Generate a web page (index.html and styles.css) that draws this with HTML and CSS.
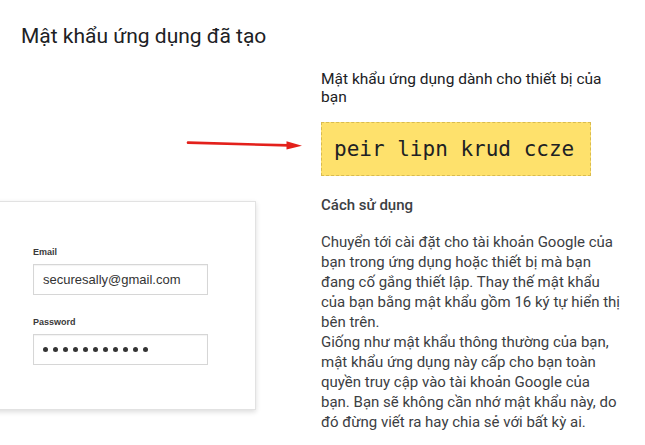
FILE: index.html
```html
<!DOCTYPE html>
<html lang="vi">
<head>
  <meta charset="UTF-8">
  <meta name="viewport" content="width=device-width, initial-scale=1.0">
  <title>Mật khẩu ứng dụng đã tạo</title>
  <link rel="stylesheet" href="styles.css">
</head>
<body>

  <h2 class="title">Mật khẩu ứng dụng đã tạo</h2>

  <div class="main">
    <div class="left-col">
      <!-- arrow pointing to the generated password -->
      <svg class="arrow" width="118" height="12" viewBox="0 0 118 12">
        <path d="M2 4.6 L103 7.4" stroke="#e3201b" stroke-width="2.6" stroke-linecap="round" fill="none"/>
        <path d="M100.5 3.2 L116 7.8 L100.5 11.4 Z" fill="#e3201b"/>
      </svg>

      <div class="login-card">
        <label class="field-label">Email</label>
        <div class="field-box">securesally@gmail.com</div>

        <label class="field-label">Password</label>
        <div class="field-box dots">
          <span></span><span></span><span></span><span></span><span></span><span></span><span></span><span></span><span></span><span></span><span></span>
        </div>
      </div>
    </div>

    <div class="right-col">
      <p class="device-title">Mật khẩu ứng dụng dành cho thiết bị của bạn</p>
      <div class="app-password">peir lipn krud ccze</div>
      <p class="how-title">Cách sử dụng</p>
      <p class="how-text">Chuyển tới cài đặt cho tài khoản Google của bạn trong ứng dụng hoặc thiết bị mà bạn đang cố gắng thiết lập. Thay thế mật khẩu của bạn bằng mật khẩu gồm 16 ký tự hiển thị bên trên.<br>Giống như mật khẩu thông thường của bạn, mật khẩu ứng dụng này cấp cho bạn toàn quyền truy cập vào tài khoản Google của bạn. Bạn sẽ không cần nhớ mật khẩu này, do đó đừng viết ra hay chia sẻ với bất kỳ ai.</p>
    </div>
  </div>

</body>
</html>
```

FILE: styles.css
```css
body { margin: 0; font-family: Roboto, "Noto Sans", Arial, sans-serif; color: #202124; background: #fff; overflow: hidden; }
.title { margin: 0; padding: 24px 21px 0; font-size: 21px; line-height: 24px; font-weight: 400; color: #202124; }

.main { display: flex; margin-top: 21px; }
.left-col { flex: none; width: 321px; padding-top: 69px; }
.right-col { flex: none; width: 299px; }

.arrow { display: block; margin-left: 186px; }

.login-card { box-sizing: border-box; width: 266px; margin: 51px 0 0 -10px; padding: 45px 0 44px 42px; background: #fff; border: 1px solid #e2e2e2; box-shadow: 0 2px 5px rgba(0,0,0,.14); font-family: "Liberation Sans", Arial, sans-serif; }
.field-label { display: block; font-size: 9px; line-height: 11px; font-weight: bold; color: #3a3a3a; margin-bottom: 6px; }
.field-box { box-sizing: border-box; width: 175px; height: 31px; border: 1px solid #d6d6d6; box-shadow: inset 0 1px 1px rgba(0,0,0,.05); padding: 0 9px; font-size: 13px; line-height: 29px; color: #333; margin-bottom: 22px; }
.field-box:last-child { margin-bottom: 0; }
.dots { display: flex; align-items: center; gap: 5px; }
.dots span { width: 5px; height: 5px; border-radius: 50%; background: #333; }

.device-title { margin: 0; padding-top: 1px; font-size: 15.5px; line-height: 18px; font-weight: 400; color: #202124; }
.app-password { box-sizing: border-box; width: 270px; height: 54px; margin-top: 16px; padding: 0 12px; background: #fee16c; border: 1px dashed #d9bb4f; font-family: "DejaVu Sans Mono", monospace; font-size: 21px; line-height: 52px; color: #202124; }
.how-title { margin: 19px 0 0; font-size: 15px; line-height: 20px; font-weight: 500; color: #3c4043; }
.how-text { margin: 17px 0 0; font-size: 15px; line-height: 20px; color: #3c4043; }
```
